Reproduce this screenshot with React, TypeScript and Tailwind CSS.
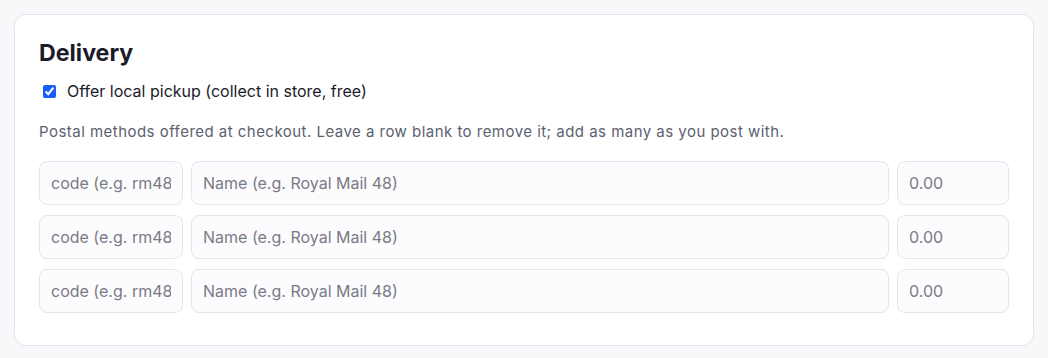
import { useState } from 'react';

interface ShippingRow {
    code: string;
    name: string;
    price: string;
}

export default function App() {
    const [pickup, setPickup] = useState(true);
    const [rows, setRows] = useState<ShippingRow[]>([
        { code: '', name: '', price: '' },
        { code: '', name: '', price: '' },
        { code: '', name: '', price: '' },
    ]);

    const updateRow = (index: number, field: keyof ShippingRow, value: string) => {
        setRows((prev) => prev.map((row, i) => (i === index ? { ...row, [field]: value } : row)));
    };

    const inputClass =
        'h-11 rounded-lg border border-[#e6e6ee] bg-[#fcfcfe] px-[11px] text-base text-[#1b1b29] placeholder:text-[#7a7a84] outline-none';

    return (
        <div className="min-h-[358px] bg-[#f8f8fb] p-[14px] font-['Inter',sans-serif]">
            <div className="rounded-xl border border-[#e4e4ec] bg-white px-6 pt-6 pb-8">
                <h2 className="text-[23.2px] leading-7 font-bold text-[#1b1b29]">Delivery</h2>
                <label className="mt-3 flex h-6 items-center gap-[11px] pl-1 text-base text-[#1b1b29]">
                    <input
                        type="checkbox"
                        checked={pickup}
                        onChange={(e) => setPickup(e.target.checked)}
                        className="h-[13px] w-[13px] accent-blue-600"
                    />
                    Offer local pickup (collect in store, free)
                </label>
                <p className="mt-[19px] text-[15px] leading-5 tracking-[0.47px] text-[#5b6170]">
                    Postal methods offered at checkout. Leave a row blank to remove it; add as many as you post with.
                </p>
                <div className="mt-[19px] flex flex-col gap-[10px]">
                    {rows.map((row, i) => (
                        <div key={i} className="flex gap-2">
                            <input
                                value={row.code}
                                onChange={(e) => updateRow(i, 'code', e.target.value)}
                                placeholder="code (e.g. rm48)"
                                className={`${inputClass} w-[144px]`}
                            />
                            <input
                                value={row.name}
                                onChange={(e) => updateRow(i, 'name', e.target.value)}
                                placeholder="Name (e.g. Royal Mail 48)"
                                className={`${inputClass} min-w-0 flex-1`}
                            />
                            <input
                                value={row.price}
                                onChange={(e) => updateRow(i, 'price', e.target.value)}
                                placeholder="0.00"
                                className={`${inputClass} w-[112px]`}
                            />
                        </div>
                    ))}
                </div>
            </div>
        </div>
    );
}
